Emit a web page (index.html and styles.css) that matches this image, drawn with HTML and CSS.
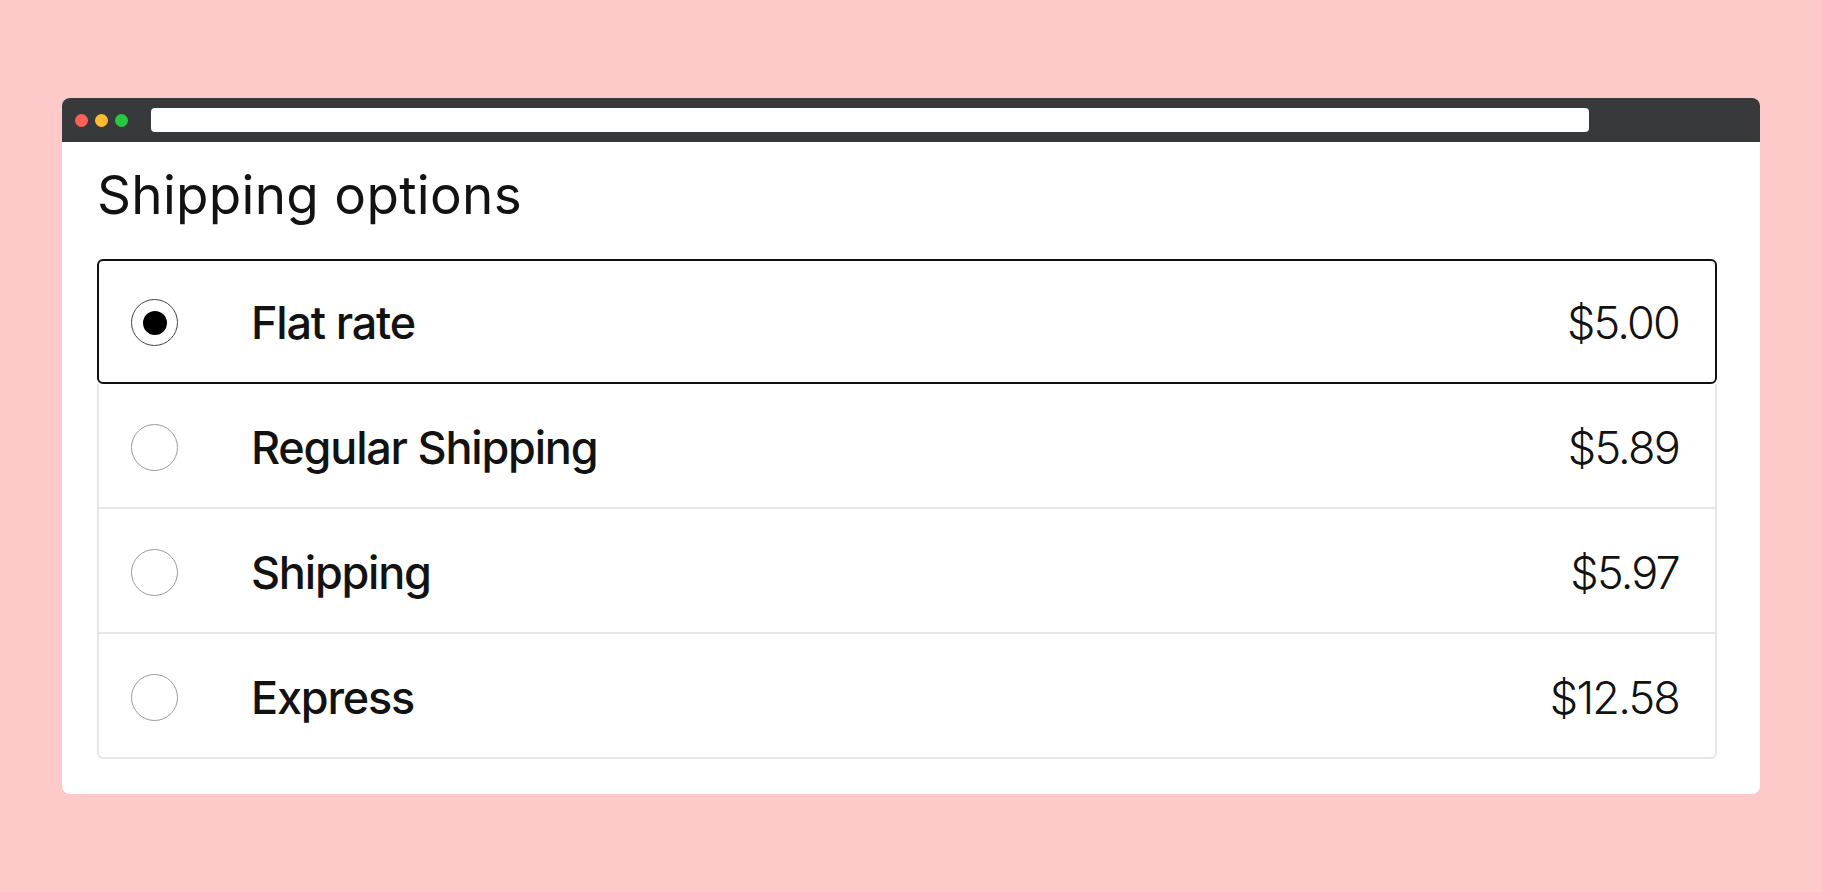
FILE: index.html
```html
<!DOCTYPE html>
<html>
<head>
<meta charset="utf-8">
<link rel="stylesheet" href="styles.css">
</head>
<body>
<div class="window">
  <div class="titlebar">
    <span class="dot red"></span>
    <span class="dot yellow"></span>
    <span class="dot green"></span>
    <div class="address"></div>
  </div>
  <div class="content">
    <h1 class="title">Shipping options</h1>
    <div class="options">
      <label class="option selected">
        <span class="radio"><span class="radio-dot"></span></span>
        <span class="label">Flat rate</span>
        <span class="price">$5.00</span>
      </label>
      <label class="option">
        <span class="radio"></span>
        <span class="label">Regular Shipping</span>
        <span class="price">$5.89</span>
      </label>
      <label class="option">
        <span class="radio"></span>
        <span class="label">Shipping</span>
        <span class="price">$5.97</span>
      </label>
      <label class="option last">
        <span class="radio"></span>
        <span class="label">Express</span>
        <span class="price">$12.58</span>
      </label>
    </div>
  </div>
</div>
</body>
</html>
```
FILE: styles.css
```css
* { box-sizing: border-box; }
html, body {
  margin: 0;
  padding: 0;
  background: #fec9c9;
  font-family: Inter, "Noto Sans", sans-serif;
  color: #121212;
}
body {
  padding: 98px 0 0 62px;
}
.window {
  width: 1698px;
  background: #ffffff;
  border-radius: 8px;
  overflow: hidden;
}
.titlebar {
  height: 44px;
  background: #38393b;
  display: flex;
  align-items: center;
  padding-left: 13px;
  gap: 7px;
}
.dot {
  width: 13px;
  height: 13px;
  border-radius: 50%;
  display: block;
}
.red { background: #fe5f57; }
.yellow { background: #febc2e; }
.green { background: #28c840; }
.address {
  margin-left: 16px;
  width: 1438px;
  height: 24px;
  background: #ffffff;
  border-radius: 4px;
}
.content {
  padding: 22px 43px 35px 35px;
}
.title {
  margin: 0 0 33px 0;
  font-size: 53px;
  line-height: 62px;
  font-weight: 400;
  letter-spacing: 0.3px;
}
.options {
  display: flex;
  flex-direction: column;
}
.option {
  height: 125px;
  display: flex;
  align-items: center;
  padding: 4px 36px 0 32px;
  border-left: 2px solid #e6e6e6;
  border-right: 2px solid #e6e6e6;
  border-bottom: 2px solid #e6e6e6;
}
.option.selected {
  border: 2.5px solid #111111;
  border-radius: 6px;
  padding-top: 2px;
}
.option.last {
  border-radius: 0 0 6px 6px;
}
.radio {
  width: 47px;
  height: 47px;
  border-radius: 50%;
  border: 1.5px solid #9a9a9a;
  display: flex;
  align-items: center;
  justify-content: center;
  flex: none;
}
.selected .radio {
  border-color: #444;
}
.radio-dot {
  width: 24px;
  height: 24px;
  border-radius: 50%;
  background: #000;
}
.label {
  margin-left: 73px;
  font-size: 45px;
  font-weight: 500;
  letter-spacing: -1.2px;
  flex: 1;
}
.price {
  font-size: 45px;
  font-weight: 300;
  letter-spacing: -1.8px;
}
```
